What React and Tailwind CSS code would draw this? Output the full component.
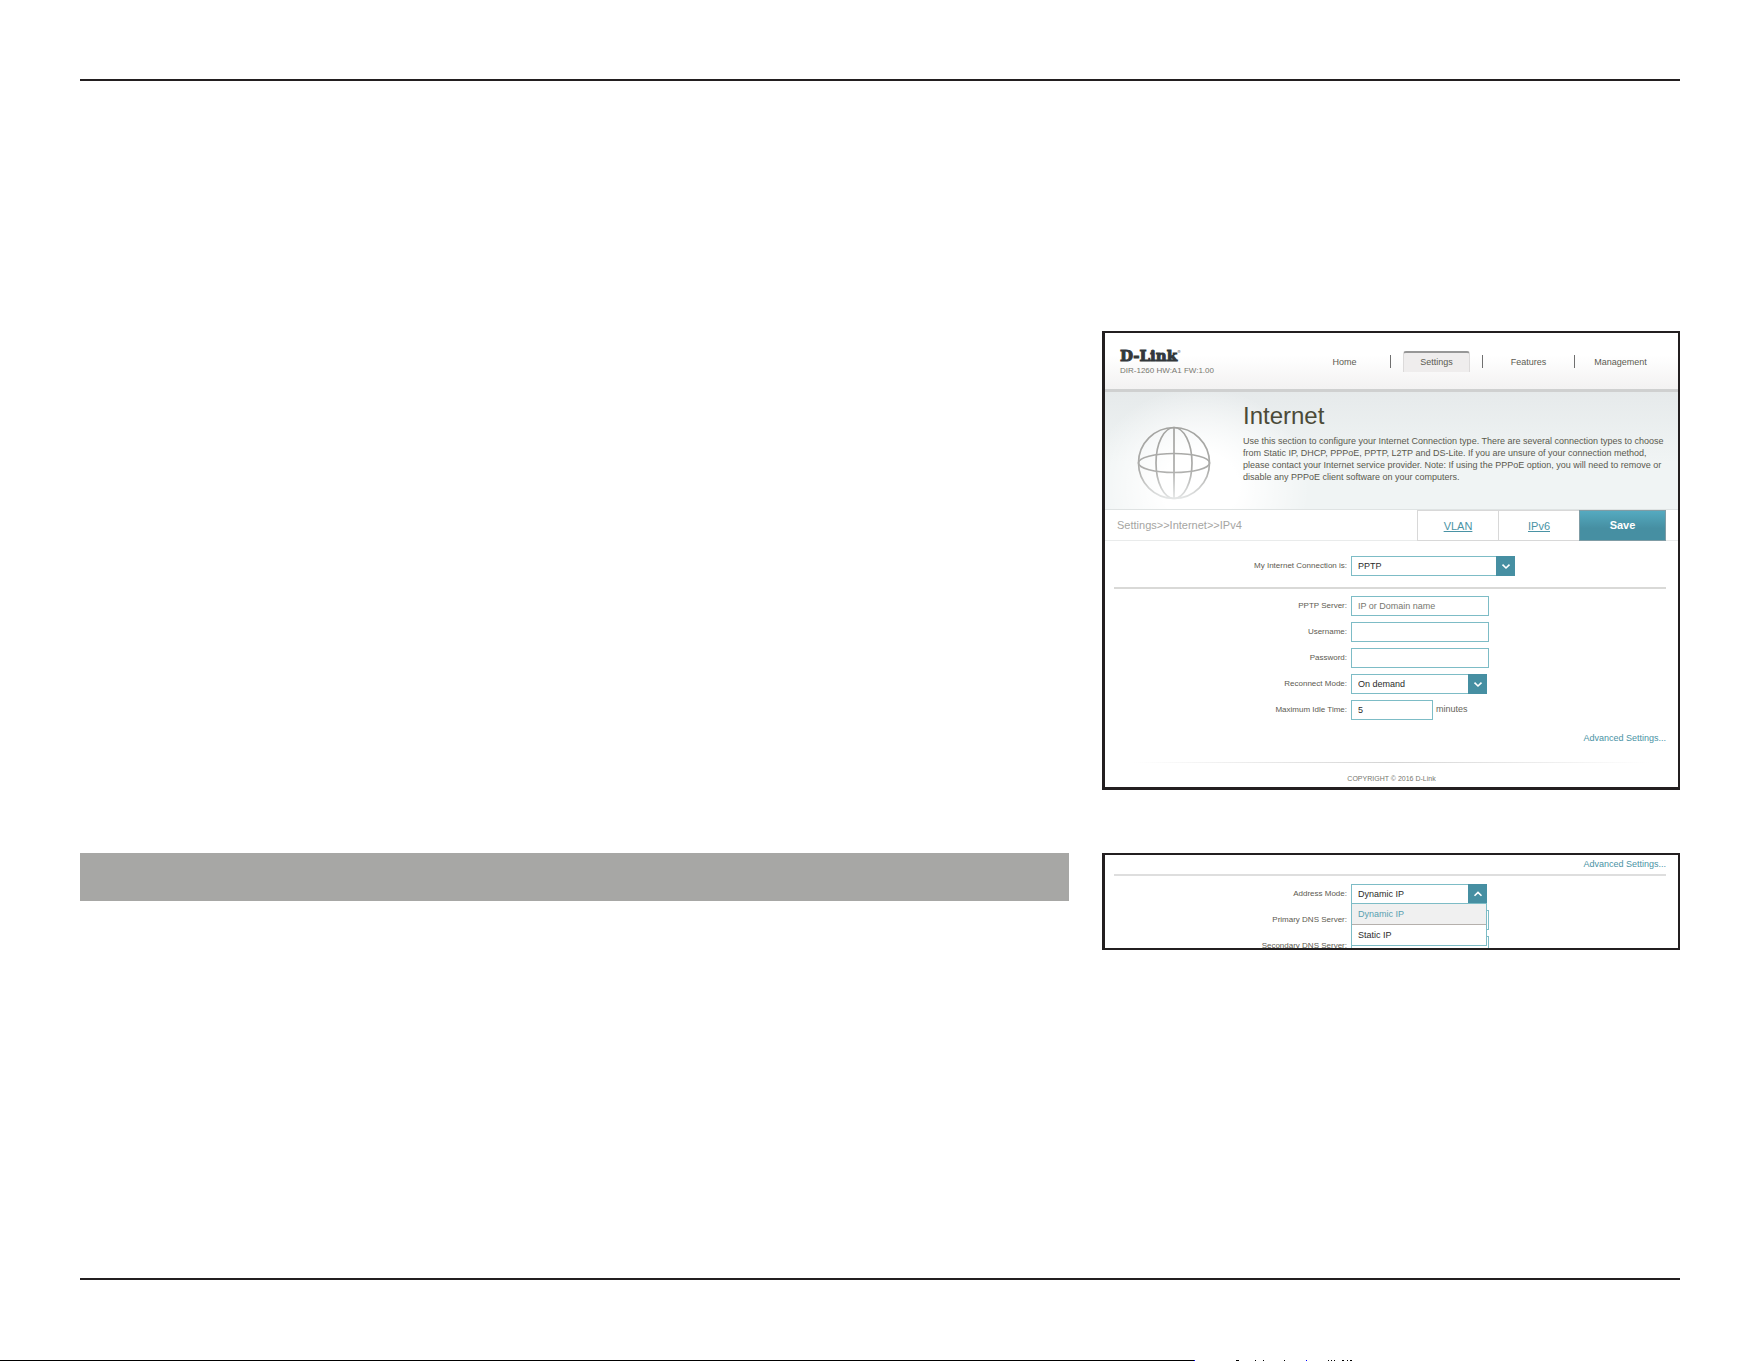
import React from "react";

const SANS = "font-['Liberation_Sans',Arial,sans-serif]";

function Chevron({ up }) {
  return (
    <svg viewBox="0 0 10 10" className="h-[10px] w-[10px]" fill="none" stroke="#fff" strokeWidth="1.6" aria-hidden="true">
      <path d={up ? "M1.5 6.8 L5 3.4 L8.5 6.8" : "M1.5 3.6 L5 7 L8.5 3.6"} />
    </svg>
  );
}

function SelectBox({ id, options, up, className }) {
  return (
    <div className={"relative h-5 border border-[#7dbcc6] bg-white " + className}>
      <select id={id} className="block h-full w-full appearance-none bg-transparent pl-[6px] text-[9px] leading-[18px] text-[#2b2b2b] outline-none">
        {options.map((o) => (
          <option key={o}>{o}</option>
        ))}
      </select>
      <span className="pointer-events-none absolute -inset-y-px -right-px flex w-[19px] items-center justify-center bg-[#468fa2]">
        <Chevron up={up} />
      </span>
    </div>
  );
}

function Field({ id, label, children }) {
  return (
    <div className="flex h-5 items-center">
      <label htmlFor={id} className="w-[246px] shrink-0 pr-1 text-right text-[8px] leading-[18px] text-[#5c5a50]">
        {label}
      </label>
      {children}
    </div>
  );
}

const INPUT =
  "h-5 border border-[#7dbcc6] bg-white pl-[6px] text-[9px] text-[#2b2b2b] outline-none placeholder:text-[#77776f]";

function Globe() {
  return (
    <svg viewBox="0 0 74 74" className="h-[74px] w-[74px]" fill="none" stroke="url(#globeFade)" strokeWidth="1.7" aria-hidden="true">
      <defs>
        <linearGradient id="globeFade" gradientUnits="userSpaceOnUse" x1="0" y1="0" x2="0" y2="74">
          <stop offset="0" stopColor="#a3a3a0" />
          <stop offset="0.6" stopColor="#adadab" />
          <stop offset="1" stopColor="#e6e8e8" />
        </linearGradient>
      </defs>
      <circle cx="37" cy="37" r="35.5" />
      <ellipse cx="37" cy="37" rx="18" ry="35.5" />
      <ellipse cx="37" cy="37" rx="35.5" ry="9.5" />
      <path d="M37 1.5 L37.01 72.5" />
    </svg>
  );
}

function NavItem({ label, active, first }) {
  return (
    <li className="flex w-[92px] items-center">
      <span className={first ? "h-[13px] w-px" : "h-[13px] w-px bg-[#6f6f6f]"} />
      <a
        href="#"
        className={
          active
            ? "mx-auto w-[67px] rounded-t-[3px] border-x border-t-2 border-[#dcdada] border-t-[#979797] bg-[#efeded] text-center text-[9px] leading-[19px] text-[#5c5b52]"
            : "mx-auto pt-[2px] text-[9px] leading-[19px] text-[#5c5b52]"
        }
      >
        {label}
      </a>
    </li>
  );
}

function InternetPanel() {
  return (
    <section className="border-t-2 border-r-2 border-b-3 border-l-3 border-[#231f20] bg-white">
      <header className="flex h-[56px] justify-between bg-linear-to-b from-white from-40% to-[#f3f2f2] pr-[12px] pl-[15px]">
        <div className="pt-[13px] text-[#33383b]">
          <div className="flex items-start font-['DejaVu_Serif',serif] text-[15px] leading-[20px] font-bold">
            <span className="[-webkit-text-stroke:1px_#33383b]">D-Link</span>
            <span className="text-[4px] leading-[12px] font-normal">®</span>
          </div>
          <div className="text-[8px] leading-[10px] text-[#77776f]">DIR-1260 HW:A1 FW:1.00</div>
        </div>
        <nav className="pt-[18px]">
          <ul className="flex">
            <NavItem label="Home" first />
            <NavItem label="Settings" active />
            <NavItem label="Features" />
            <NavItem label="Management" />
          </ul>
        </nav>
      </header>

      <div className="flex h-[121px] border-t-3 border-b border-t-[#cfd0d0] border-b-[#dfe3e3] bg-[radial-gradient(ellipse_110px_100px_at_95px_95px,#ffffff_0%,#ffffff_35%,transparent_100%),linear-gradient(to_bottom,#e6eaeb,#f0f4f4_60%)]">
        <div className="flex w-[138px] shrink-0 justify-center pt-[34px]">
          <Globe />
        </div>
        <div className="flex-1 pr-[12px] text-[#5a594e]">
          <h1 className="pt-[8px] text-[24px] leading-[32px] text-[#4b4a38]">Internet</h1>
          <p className="pt-[3px] text-[9px] leading-[12px]">
            Use this section to configure your Internet Connection type. There are several connection types to choose
            from Static IP, DHCP, PPPoE, PPTP, L2TP and DS-Lite. If you are unsure of your connection method, please
            contact your Internet service provider. Note: If using the PPPoE option, you will need to remove or disable
            any PPPoE client software on your computers.
          </p>
        </div>
      </div>

      <div className="flex h-[31px] border-b border-[#e9ebeb] pr-[12px] pl-[12px] text-[11px]">
        <div className="flex-1 leading-[31px] text-[#a5a5a2]">Settings&gt;&gt;Internet&gt;&gt;IPv4</div>
        <a href="#" className="h-[31px] w-[81px] border border-r-0 border-[#d8d8d8] text-center leading-[30px] text-[#4a93a5] underline">
          VLAN
        </a>
        <a href="#" className="h-[31px] w-[81px] border border-r-0 border-[#d8d8d8] text-center leading-[30px] text-[#4a93a5] underline">
          IPv6
        </a>
        <button type="button" className="h-[31px] w-[87px] border border-[#7f9ca5] bg-linear-to-b from-[#55aac0] to-[#468fa2] to-60% font-bold text-white">
          Save
        </button>
      </div>

      <form className="pt-[15px]">
        <Field id="connection" label="My Internet Connection is:">
          <SelectBox id="connection" options={["PPTP"]} className="w-[164px]" />
        </Field>
        <hr className="mt-[11px] mr-[12px] mb-[7px] ml-[9px] border-t-2 border-[#d9d9d7]" />
        <div className="flex flex-col gap-[6px]">
          <Field id="server" label="PPTP Server:">
            <input id="server" placeholder="IP or Domain name" className={INPUT + " w-[138px]"} />
          </Field>
          <Field id="username" label="Username:">
            <input id="username" className={INPUT + " w-[138px]"} />
          </Field>
          <Field id="password" label="Password:">
            <input id="password" type="password" className={INPUT + " w-[138px]"} />
          </Field>
          <Field id="reconnect" label="Reconnect Mode:">
            <SelectBox id="reconnect" options={["On demand"]} className="w-[136px]" />
          </Field>
          <Field id="idle" label="Maximum Idle Time:">
            <input id="idle" defaultValue="5" className={INPUT + " w-[82px]"} />
            <span className="pl-[3px] text-[9px] text-[#66645a]">minutes</span>
          </Field>
        </div>
        <div className="flex justify-end pt-[12px] pr-[12px]">
          <a href="#" className="text-[9px] leading-[12px] text-[#4a93a5]">Advanced Settings...</a>
        </div>
      </form>

      <footer className="px-[28px] pt-[18px] pb-[3px] text-center">
        <div className="h-px bg-linear-to-r from-transparent via-[#d4d4d4] to-transparent" />
        <p className="pt-[10px] text-[7px] leading-[11px] text-[#77776f]">COPYRIGHT © 2016 D-Link</p>
      </footer>
    </section>
  );
}

function AdvancedPanel() {
  return (
    <section className="h-[97px] overflow-hidden border-2 border-l-3 border-[#231f20] bg-white">
      <div className="flex justify-end pt-[3px] pr-[12px]">
        <a href="#" className="text-[9px] leading-[12px] text-[#4a93a5]">Advanced Settings...</a>
      </div>
      <hr className="mt-[4px] mr-[12px] mb-[8px] ml-[9px] border-t-2 border-[#dedede]" />
      <div className="flex flex-col gap-[6px]">
        <Field id="address" label="Address Mode:">
          <div className="relative">
            <SelectBox id="address" options={["Dynamic IP", "Static IP"]} up className="w-[136px]" />
            <ul className="absolute top-[19px] left-0 w-[136px] border border-[#7dbcc6] bg-white text-[9px] leading-[20px]">
              <li className="border-b border-[#b5b0ac] bg-[#f0f0f0] pl-[6px] text-[#5aa0b0]">Dynamic IP</li>
              <li className="pl-[6px] text-[#2b2b2b]">Static IP</li>
            </ul>
          </div>
        </Field>
        <Field id="dns1" label="Primary DNS Server:">
          <input id="dns1" className={INPUT + " w-[138px]"} />
        </Field>
        <Field id="dns2" label="Secondary DNS Server:">
          <input id="dns2" className={INPUT + " w-[138px]"} />
        </Field>
      </div>
    </section>
  );
}

function BottomEdge() {
  return (
    <div className="flex h-px">
      <div className="w-[1194px] bg-black" />
      <svg viewBox="0 0 160 1" className="h-px w-[160px]" shapeRendering="crispEdges" aria-hidden="true">
        <path d="M42 0h3v1h-3zM61 0h1v1h-1zM69 0h1v1h-1zM90 0h1v1h-1zM134 0h1v1h-1zM137 0h1v1h-1zM140 0h1v1h-1zM148 0h2v1h-2zM153 0h1v1h-1zM156 0h2v1h-2z" fill="#000" />
        <path d="M0 0h1v1h-1zM112 0h1v1h-1z" fill="#00f" />
      </svg>
    </div>
  );
}

export default function App() {
  return (
    <div className={"flex min-h-screen flex-col bg-white " + SANS}>
      <main className="mt-[79px] mr-[81px] mb-[80px] ml-[80px] flex flex-1 flex-col border-y-2 border-[#231f20] pt-[250px]">
        <div className="grid grid-cols-[989fr_578fr] gap-x-[33px] gap-y-[63px]">
          <div className="col-start-2">
            <InternetPanel />
          </div>
          <div className="col-start-1 h-[48px] bg-[#a7a7a5]" />
          <div className="col-start-2">
            <AdvancedPanel />
          </div>
        </div>
      </main>
      <BottomEdge />
    </div>
  );
}
